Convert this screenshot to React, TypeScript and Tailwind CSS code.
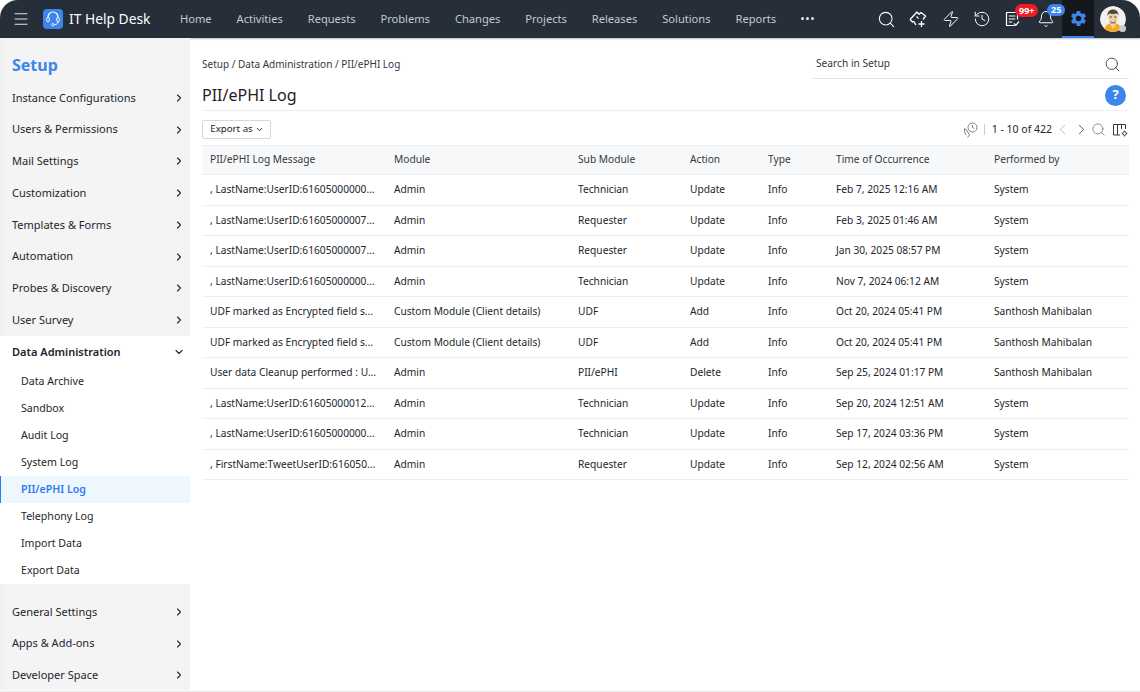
import { Search, Zap, History, Bell, ChevronRight, ChevronLeft, ChevronDown, Menu } from "lucide-react";
import { MdSettings } from "react-icons/md";

const navItems = ["Home", "Activities", "Requests", "Problems", "Changes", "Projects", "Releases", "Solutions", "Reports"];
const topMenus = ["Instance Configurations", "Users & Permissions", "Mail Settings", "Customization", "Templates & Forms", "Automation", "Probes & Discovery", "User Survey"];
const subMenus = ["Data Archive", "Sandbox", "Audit Log", "System Log", "PII/ePHI Log", "Telephony Log", "Import Data", "Export Data"];
const bottomMenus = ["General Settings", "Apps & Add-ons", "Developer Space"];

const columns = ["PII/ePHI Log Message", "Module", "Sub Module", "Action", "Type", "Time of Occurrence", "Performed by"];
const rows = [
  [", LastName:UserID:61605000000...", "Admin", "Technician", "Update", "Info", "Feb 7, 2025 12:16 AM", "System"],
  [", LastName:UserID:61605000007...", "Admin", "Requester", "Update", "Info", "Feb 3, 2025 01:46 AM", "System"],
  [", LastName:UserID:61605000007...", "Admin", "Requester", "Update", "Info", "Jan 30, 2025 08:57 PM", "System"],
  [", LastName:UserID:61605000000...", "Admin", "Technician", "Update", "Info", "Nov 7, 2024 06:12 AM", "System"],
  ["UDF marked as Encrypted field s...", "Custom Module (Client details)", "UDF", "Add", "Info", "Oct 20, 2024 05:41 PM", "Santhosh Mahibalan"],
  ["UDF marked as Encrypted field s...", "Custom Module (Client details)", "UDF", "Add", "Info", "Oct 20, 2024 05:41 PM", "Santhosh Mahibalan"],
  ["User data Cleanup performed : U...", "Admin", "PII/ePHI", "Delete", "Info", "Sep 25, 2024 01:17 PM", "Santhosh Mahibalan"],
  [", LastName:UserID:61605000012...", "Admin", "Technician", "Update", "Info", "Sep 20, 2024 12:51 AM", "System"],
  [", LastName:UserID:61605000000...", "Admin", "Technician", "Update", "Info", "Sep 17, 2024 03:36 PM", "System"],
  [", FirstName:TweetUserID:616050...", "Admin", "Requester", "Update", "Info", "Sep 12, 2024 02:56 AM", "System"],
];

const gridCols = "grid grid-cols-[184px_184px_112px_78px_68px_158px_143px]";

function Logo() {
  return (
    <svg width="20" height="20" viewBox="0 0 20 20" fill="none">
      <rect width="20" height="20" rx="4" fill="#3d85ec" />
      <path d="M5 9V8a5 5 0 0 1 10 0v1" stroke="#fff" strokeWidth="1.2" />
      <rect x="3.700" y="8.500" width="2.600" height="4.200" rx="1.200" stroke="#fff" strokeWidth="1" />
      <rect x="13.700" y="8.500" width="2.600" height="4.200" rx="1.200" stroke="#fff" strokeWidth="1" />
      <path d="M15 13c0 1.800-2 2.700-4 2.700" stroke="#fff" strokeWidth="1" />
      <circle cx="9.800" cy="15.700" r="1.200" stroke="#fff" strokeWidth="0.8" />
    </svg>
  );
}

function TicketIcon() {
  return (
    <svg width="18" height="18" viewBox="0 0 18 18" fill="none" stroke="#fff" strokeWidth="1.300" strokeLinejoin="round">
      <path d="M1 9.500L8 2l2 2.200 2-1.700 4.500 3.500-2.500 3.500" />
      <path d="M1 9.500l2.500 2.500c.8-.6 1.800-.4 2 .8L7 15" />
      <path d="M7.500 6.500l2 2" />
      <path d="M9.500 14h6M12.500 11v6" />
    </svg>
  );
}

function TaskIcon() {
  return (
    <svg width="16" height="18" viewBox="0 0 16 18" fill="none" stroke="#fff" strokeWidth="1.200">
      <path d="M9.500 15.500H1.500V2.500h11V9.500" />
      <path d="M3.800 6h6.500M3.800 9h6.500M3.800 12h3.500" />
      <path d="M9 13.500l1.800 1.800 3.200-3.800" />
    </svg>
  );
}

function Avatar() {
  return (
    <div className="relative h-[26px] w-[26px]">
      <svg width="26" height="26" viewBox="0 0 26 26" className="rounded-full">
        <circle cx="13" cy="13" r="13" fill="#f3f1ec" />
        <path d="M4 26c0-6 4-9 9-9s9 3 9 9z" fill="#f5a623" />
        <path d="M10.500 15h5v4l-2.500 4-2.500-4z" fill="#f2d3b0" />
        <ellipse cx="13" cy="11.500" rx="4.600" ry="6" fill="#f0cba3" />
        <path d="M7.500 10c-.5-5 3-6.500 5.500-6.500s6 1.500 5.500 6.500l-1-2.500c-3 .5-6 .5-8.500 0z" fill="#4a4a44" />
        <path d="M9.500 11h2.500M14 11h2.500" stroke="#555" strokeWidth="1" />
        <path d="M10 14.500c1.500 2 4.500 2 6 0l-.5 3h-5z" fill="#8c8172" />
      </svg>
      <span className="absolute bottom-0 right-0 h-[7px] w-[7px] rounded-full bg-[#c9ccd0]" />
    </div>
  );
}

function Header() {
  return (
    <header className="flex h-[38px] shrink-0 items-center rounded-t-[18px] bg-[#252e39] shadow-[0_1px_2px_rgba(0,0,0,0.25)]">
      <Menu size={18} strokeWidth={1.300} className="ml-[12px] text-[#e8eaec]" />
      <div className="ml-[13px]">
        <Logo />
      </div>
      <span className="ml-[6px] w-[111px] text-[13.800px] text-white">IT Help Desk</span>
      <nav className="flex items-center gap-[25px] text-[11.100px] text-[#c4c9cf]">
        {navItems.map((item) => (
          <span key={item}>{item}</span>
        ))}
        <span className="flex gap-[2px]">
          <i className="h-[3px] w-[3px] rounded-full bg-[#e8eaec]" />
          <i className="h-[3px] w-[3px] rounded-full bg-[#e8eaec]" />
          <i className="h-[3px] w-[3px] rounded-full bg-[#e8eaec]" />
        </span>
      </nav>
      <div className="ml-auto flex h-full items-center">
        <Search size={19} strokeWidth={1.300} className="mr-[13px] text-white" />
        <div className="mr-[15px]">
          <TicketIcon />
        </div>
        <Zap size={18} strokeWidth={1.300} className="mr-[13px] text-white" />
        <History size={18} strokeWidth={1.300} className="mr-[14px] text-white" />
        <div className="relative mr-[16px]">
          <TaskIcon />
          <span className="absolute left-[10px] top-[-6px] rounded-full bg-[#ef1c25] px-[4px] text-[9px] font-bold leading-[13px] text-white">99+</span>
        </div>
        <div className="relative mr-[7px]">
          <Bell size={18} strokeWidth={1.300} className="text-white" />
          <span className="absolute left-[10px] top-[-6px] rounded-full bg-[#3d85ec] px-[4px] text-[9px] font-bold leading-[12px] text-white">25</span>
        </div>
        <div className="mr-[6px] flex h-full w-[32px] items-center justify-center border-b-2 border-[#3d85ec] bg-[#14181d]">
          <MdSettings size={19} className="text-[#3d85ec]" />
        </div>
        <div className="mr-[14px]">
          <Avatar />
        </div>
      </div>
    </header>
  );
}

function MenuRow({ label }: { label: string }) {
  return (
    <div className="flex h-[31.750px] shrink-0 items-center justify-between pl-[12px] pr-[5px] text-[11px] text-[#22262b]">
      <span>{label}</span>
      <ChevronRight size={12} strokeWidth={2.200} />
    </div>
  );
}

function Sidebar() {
  return (
    <aside className="flex w-[190px] shrink-0 flex-col overflow-hidden bg-[#f4f4f4] bg-gradient-to-r from-[#eeeeee] to-[#f4f4f4] to-[6px]">
      <div className="h-[44px] shrink-0 pl-[12px] pt-[17px] text-[16px] font-bold leading-[20px] text-[#3d85ec]">Setup</div>
      {topMenus.map((m) => (
        <MenuRow key={m} label={m} />
      ))}
      <div className="shrink-0 bg-white">
        <div className="flex h-[32px] items-center justify-between pl-[12px] pr-[5px] text-[11px] font-semibold text-[#22262b]">
          <span>Data Administration</span>
          <ChevronDown size={12} strokeWidth={2.200} />
        </div>
        {subMenus.map((s) =>
          s === "PII/ePHI Log" ? (
            <div key={s} className="flex h-[27px] items-center border-l-[1px] border-[#2f7bf0] bg-[#eef7fe] pl-[20px] text-[10.600px] font-semibold text-[#2f7bf0]">
              {s}
            </div>
          ) : (
            <div key={s} className="flex h-[27px] items-center pl-[21px] text-[10.600px] text-[#22262b]">
              {s}
            </div>
          ),
        )}
      </div>
      <div className="h-[12px] shrink-0" />
      {bottomMenus.map((m) => (
        <MenuRow key={m} label={m} />
      ))}
    </aside>
  );
}

function Toolbar() {
  return (
    <div className="flex h-[34px] items-center justify-between pt-[3px]">
      <button className="flex h-[19px] w-[69px] items-center justify-center gap-[2px] rounded-[2px] border border-[#d5d8dc] pl-[1px] text-[9.700px] text-[#22262b]">
        Export as
        <ChevronDown size={9} strokeWidth={2.600} />
      </button>
      <div className="flex items-center text-[10.500px] text-[#22262b]">
        <svg width="16" height="16" viewBox="0 0 16 16" fill="none" stroke="#6c7279" strokeWidth="0.900">
          <circle cx="9.500" cy="5.500" r="4.500" />
          <path d="M9.500 3v2.500l1.800 1M1.500 6.500l2.500 2 2.500 4.500-2 2.500M1.500 6.500c0 2.500.5 5 1.500 6.500" />
        </svg>
        <span className="ml-[5px] mr-[7px] h-[11px] w-px bg-[#c9ccd0]" />
        <span>1 - 10 of 422</span>
        <ChevronLeft size={17} strokeWidth={1} className="ml-[2px] text-[#9aa0a6]" />
        <ChevronRight size={17} strokeWidth={1.300} className="ml-[2px] text-[#4d535a]" />
        <Search size={15} strokeWidth={1} className="ml-[1px] text-[#4d535a]" />
        <svg width="17" height="16" viewBox="0 0 17 16" fill="none" stroke="#33383e" strokeWidth="1" className="ml-[6px]">
          <path d="M8 13H1.500V2.500h12V7M5.500 2.500V13M9.500 2.500V7" />
          <circle cx="12.500" cy="11.500" r="1.800" />
          <path d="M12.500 8.500v1M12.500 13.500v1M9.800 11.500h.9M14.300 11.500h1" />
        </svg>
      </div>
    </div>
  );
}

function LogTable() {
  return (
    <div className="text-[10.200px] text-[#22262b]">
      <div className={`${gridCols} h-[30px] items-center border-y border-[#eceef0] bg-[#f7f8f9] text-[#33383e]`}>
        {columns.map((c) => (
          <div key={c} className="pl-[8px]">
            {c}
          </div>
        ))}
      </div>
      {rows.map((row, i) => (
        <div key={i} className={`${gridCols} h-[30.500px] items-center border-b border-[#eceef0]`}>
          {row.map((cell, j) => (
            <div key={j} className="whitespace-nowrap pl-[8px]">
              {cell}
            </div>
          ))}
        </div>
      ))}
    </div>
  );
}

export default function App() {
  return (
    <div className="flex h-[692px] w-[1140px] flex-col overflow-hidden bg-white font-['Noto_Sans','Open_Sans',sans-serif]">
      <Header />
      <div className="flex min-h-0 flex-1">
        <Sidebar />
        <main className="min-w-0 flex-1 pl-[12px] pr-[11px]">
          <div className="flex h-[41px] items-end justify-between">
            <span className="pb-[7px] text-[10px] text-[#33383e]">Setup / Data Administration / PII/ePHI Log</span>
            <div className="flex h-[28px] w-[317px] items-center justify-between border-b border-[#e3e5e8] pb-[1px] pl-[4px] pr-[8px] text-[10.200px] text-[#33383e]">
              Search in Setup
              <Search size={17} strokeWidth={1.200} />
            </div>
          </div>
          <div className="flex h-[32px] items-center justify-between border-b border-[#eceef0] pt-[1px]">
            <h1 className="text-[16px] text-[#1d2126]">PII/ePHI Log</h1>
            <span className="mr-[3px] flex h-[21px] w-[21px] items-center justify-center rounded-full bg-[#3d85ec] text-[13px] font-bold text-white">?</span>
          </div>
          <Toolbar />
          <LogTable />
        </main>
      </div>
      <div className="h-[2px] shrink-0 bg-gradient-to-b from-white to-[#e6e6e6]" />
    </div>
  );
}
